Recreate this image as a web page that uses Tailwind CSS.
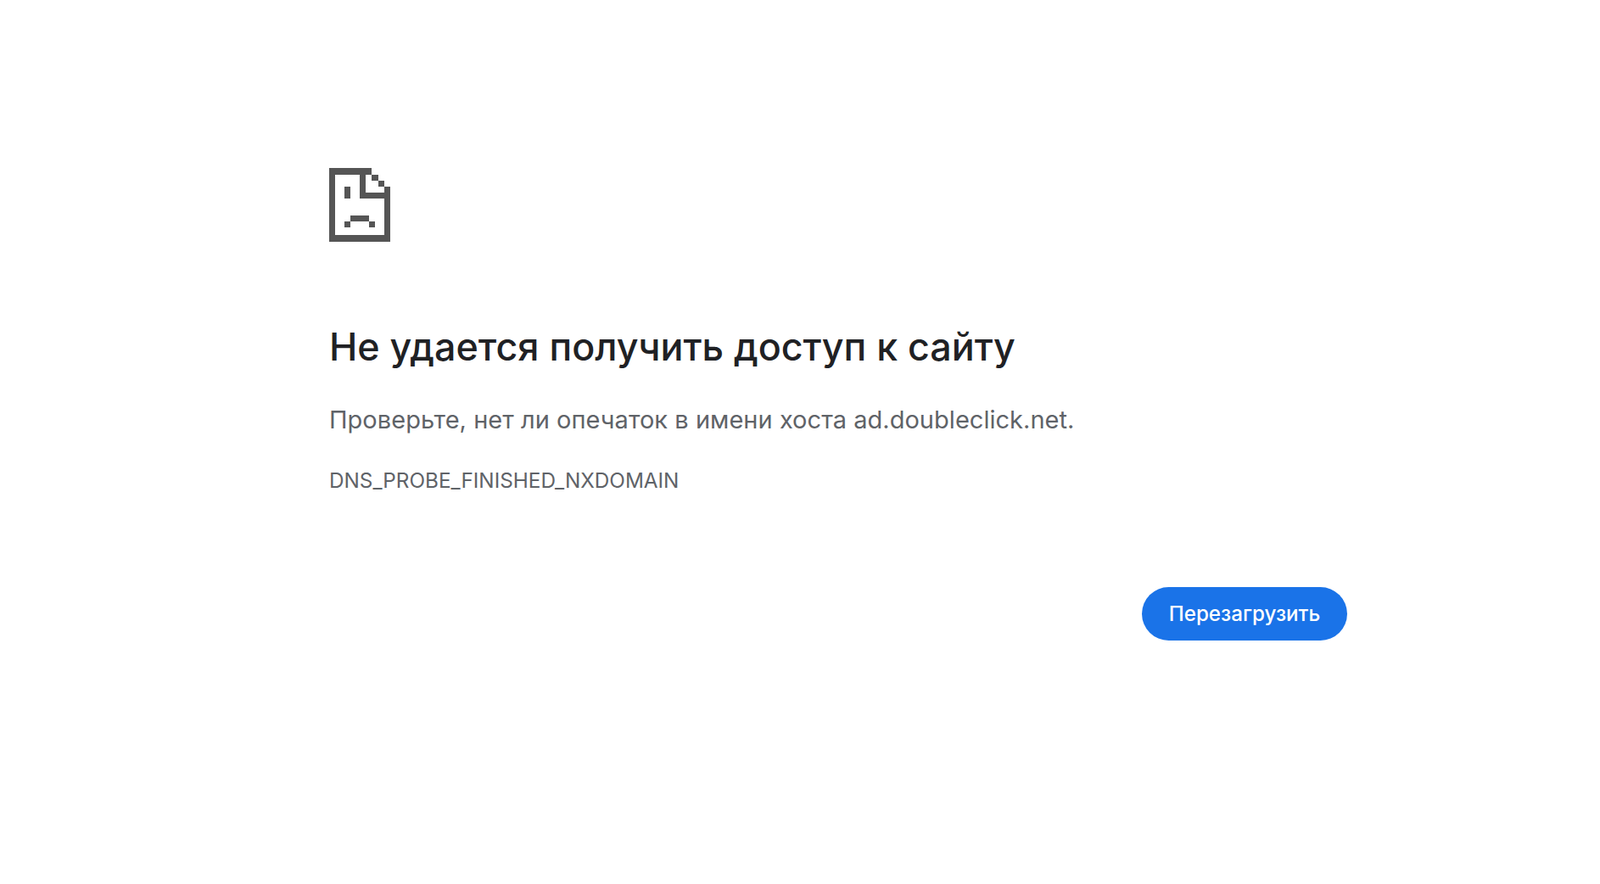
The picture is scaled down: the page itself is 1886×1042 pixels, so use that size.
<!DOCTYPE html>
<html lang="ru">

<head>
    <meta charset="UTF-8">
    <meta name="viewport" content="width=device-width, initial-scale=1.0">
    <title>ad.doubleclick.net</title>
    <script src="https://cdn.jsdelivr.net/npm/@tailwindcss/browser@4"></script>
</head>

<body class="bg-white h-[1042px] overflow-hidden font-['Inter',sans-serif]">
    <div class="w-[1200px] ml-[388px] pt-[198px]">
        <!-- sad page icon -->
        <svg class="w-[72px] h-[87px] block" viewBox="0 0 10 12" shape-rendering="crispEdges" fill="#555555">
            <rect x="0" y="0" width="7" height="1" />
            <rect x="0" y="0" width="1" height="12" />
            <rect x="0" y="11" width="10" height="1" />
            <rect x="9" y="3" width="1" height="9" />
            <rect x="5" y="1" width="1" height="4" />
            <rect x="5" y="4" width="5" height="1" />
            <rect x="7" y="1" width="1" height="1" />
            <rect x="8" y="2" width="1" height="1" />
            <rect x="2.5" y="3" width="1" height="2" />
            <rect x="3.5" y="7.75" width="3" height="1" />
            <rect x="2.5" y="8.75" width="1" height="1" />
            <rect x="6.5" y="8.75" width="1" height="1" />
        </svg>

        <h1 class="mt-[96px] text-[44.8px] leading-[56px] font-[550] text-[#202124]">Не удается получить доступ к сайту</h1>
        <p class="mt-[36px] text-[29px] leading-[44px] tracking-[0.03px] text-[#5f6368]">Проверьте, нет ли опечаток в имени хоста ad.doubleclick.net.</p>
        <div class="mt-[33px] text-[24.3px] leading-[32px] text-[#5f6368]">DNS_PROBE_FINISHED_NXDOMAIN</div>

        <div class="flex justify-end mt-[110px]">
            <button class="w-[242px] h-[63px] rounded-full bg-[#1a73e8] text-white text-[24.2px] font-medium pt-px">Перезагрузить</button>
        </div>
    </div>
</body>

</html>
